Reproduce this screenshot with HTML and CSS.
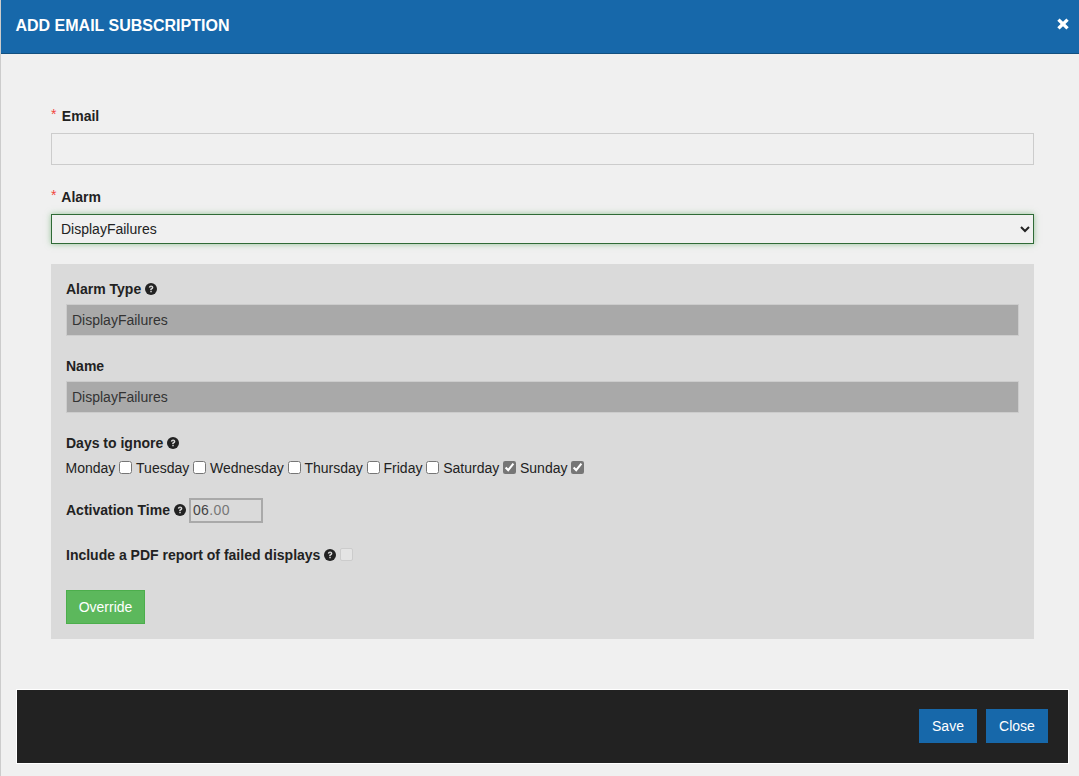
FILE: index.html
```html
<!DOCTYPE html>
<html lang="en">
<head>
<meta charset="utf-8">
<title>Add Email Subscription</title>
<link rel="stylesheet" href="styles.css">
</head>
<body>
<div class="modal">
  <header class="modal-header">
    <h1 class="modal-title">ADD EMAIL SUBSCRIPTION</h1>
    <svg class="close-icon" viewBox="0 0 12 12" aria-label="Close"><path d="M2.600 .5 6 3.700 9.400 .5 11.700 2.800 8.400 6l3.300 3.200-2.300 2.300L6 8.300 2.600 11.500 .3 9.200 3.600 6 .3 2.800z"/></svg>
  </header>
  <main class="modal-body">
    <div class="field field-email">
      <label class="req-label"><span class="star">*</span> Email</label>
      <input class="text-input" type="text">
    </div>
    <div class="field field-alarm">
      <label class="req-label"><span class="star">*</span> Alarm</label>
      <select class="select-input"><option>DisplayFailures</option></select>
    </div>
    <section class="panel">
      <div class="panel-row row-type">
        <label class="label">Alarm Type <svg class="help" viewBox="0 0 24 24"><circle cx="12" cy="12" r="12"/><path class="help-q" d="M7.6 9.200C7.900 6.500 9.700 5 12.200 5c2.600 0 4.500 1.600 4.500 3.800 0 1.800-1 2.700-2.300 3.500-1 .6-1.300 1-1.300 1.900h-2.900c0-2 .6-2.900 2-3.700 1-.6 1.400-1 1.400-1.600 0-.7-.6-1.200-1.400-1.200-.9 0-1.500.6-1.700 1.700zM10.600 15.700h2.900v3h-2.900z"/></svg></label>
        <input class="readonly-input" type="text" value="DisplayFailures" readonly>
      </div>
      <div class="panel-row row-name">
        <label class="label">Name</label>
        <input class="readonly-input" type="text" value="DisplayFailures" readonly>
      </div>
      <div class="row-days">
        <label class="label">Days to ignore <svg class="help" viewBox="0 0 24 24"><circle cx="12" cy="12" r="12"/><path class="help-q" d="M7.6 9.200C7.900 6.500 9.700 5 12.200 5c2.600 0 4.500 1.600 4.500 3.800 0 1.800-1 2.700-2.300 3.500-1 .6-1.300 1-1.300 1.900h-2.900c0-2 .6-2.900 2-3.700 1-.6 1.400-1 1.400-1.600 0-.7-.6-1.200-1.400-1.200-.9 0-1.500.6-1.700 1.700zM10.600 15.700h2.900v3h-2.900z"/></svg></label>
        <div class="days">
          <span class="day">Monday <input class="check" type="checkbox"></span>
          <span class="day">Tuesday <input class="check" type="checkbox"></span>
          <span class="day">Wednesday <input class="check" type="checkbox"></span>
          <span class="day">Thursday <input class="check" type="checkbox"></span>
          <span class="day">Friday <input class="check" type="checkbox"></span>
          <span class="day">Saturday <input class="check" type="checkbox" checked></span>
          <span class="day">Sunday <input class="check" type="checkbox" checked></span>
        </div>
      </div>
      <div class="row-time">
        <label class="label">Activation Time <svg class="help" viewBox="0 0 24 24"><circle cx="12" cy="12" r="12"/><path class="help-q" d="M7.6 9.200C7.900 6.500 9.700 5 12.200 5c2.600 0 4.500 1.600 4.500 3.800 0 1.800-1 2.700-2.300 3.500-1 .6-1.300 1-1.300 1.900h-2.900c0-2 .6-2.900 2-3.700 1-.6 1.400-1 1.400-1.600 0-.7-.6-1.200-1.400-1.200-.9 0-1.500.6-1.700 1.700zM10.600 15.700h2.900v3h-2.900z"/></svg></label>
        <div class="time-box"><span class="time-h">06</span><span class="time-m">.00</span></div>
      </div>
      <div class="row-pdf">
        <label class="label">Include a PDF report of failed displays <svg class="help" viewBox="0 0 24 24"><circle cx="12" cy="12" r="12"/><path class="help-q" d="M7.6 9.200C7.900 6.500 9.700 5 12.200 5c2.600 0 4.500 1.600 4.500 3.800 0 1.800-1 2.700-2.300 3.500-1 .6-1.300 1-1.300 1.900h-2.900c0-2 .6-2.900 2-3.700 1-.6 1.400-1 1.400-1.600 0-.7-.6-1.200-1.400-1.200-.9 0-1.500.6-1.700 1.700zM10.600 15.700h2.900v3h-2.900z"/></svg></label>
        <span class="pdf-check"></span>
      </div>
      <button class="btn-override" type="button">Override</button>
    </section>
  </main>
  <footer class="modal-footer">
    <button class="btn-primary btn-save" type="button">Save</button>
    <button class="btn-primary btn-close" type="button">Close</button>
  </footer>
</div>
</body>
</html>
```
FILE: styles.css
```css
* { box-sizing: border-box; }
html, body { margin: 0; height: 100%; }
body {
  background: #f0f0f0;
  font-family: "Liberation Sans", Arial, sans-serif;
  font-size: 14px;
  color: #222;
  overflow: hidden;
}
.modal {
  height: 776px;
  border-left: 1px solid #ccc;
}
.modal-header {
  height: 54px;
  background: #1768aa;
  border-bottom: 1px solid #125080;
  display: flex;
  align-items: center;
  justify-content: space-between;
  padding: 0 10px 1px 14.5px;
}
.modal-title {
  margin: 0;
  font-size: 16px;
  font-weight: 700;
  color: #fff;
}
.close-icon { width: 12px; height: 12px; fill: #fff; margin-bottom: 5px; }
.modal-body { padding: 52px 45px 0 50px; }
.req-label, .label {
  display: block;
  font-weight: 700;
  font-size: 14px;
  line-height: 20px;
  color: #222;
}
.star {
  color: #f0453c;
  font-weight: 400;
  font-size: 14px;
  margin-right: 1.5px;
  position: relative;
  top: -2px;
}
.field-email { height: 81px; }
.field-email .req-label { margin-bottom: 7px; }
.text-input {
  display: block;
  width: 100%;
  height: 32px;
  background: #f0f0f0;
  border: 1px solid #ccc;
  padding: 0 9px;
}
.field-alarm .req-label { margin-bottom: 7px; }
.select-input {
  display: block;
  width: 100%;
  height: 30px;
  background: #f0f0f0;
  border: 1px solid #2f6a36;
  border-radius: 0;
  box-shadow: 0 0 6px rgba(76, 160, 80, .55);
  padding: 0 5px;
  font: 14px "Liberation Sans", Arial, sans-serif;
  color: #222;
  outline: none;
}
.panel {
  margin-top: 20px;
  height: 375px;
  background: #dadada;
  padding: 15px;
}
.row-type { height: 77px; }
.row-name { height: 77px; }
.panel-row .label { margin-bottom: 5px; }
.readonly-input {
  display: block;
  width: 100%;
  height: 32px;
  background: #a9a9a9;
  border: 1px solid #ccc;
  padding: 0 5px;
  font: 14px "Liberation Sans", Arial, sans-serif;
  color: #333;
  outline: none;
}
.help { width: 12px; height: 12px; fill: #222; vertical-align: -1px; }
.help-q { fill: #dadada; }
.row-days { height: 65px; }
.days { display: flex; gap: 3.750px; line-height: 20px; margin: 5px 0 0 -0.5px; }
.day { display: inline-flex; align-items: center; gap: 4px; white-space: nowrap; }
.check { margin: 0; width: 13px; height: 13px; position: relative; top: -1px; accent-color: #767676; }
.row-time { display: flex; align-items: center; gap: 3px; height: 24px; }
.time-box {
  width: 74px;
  height: 25px;
  border: 2px solid #a9a9a9;
  padding-left: 2px;
  line-height: 21px;
  font-size: 14px;
  letter-spacing: .4px;
  background: #dadada;
}
.time-h { color: #444; }
.time-m { color: #777; }
.row-pdf { display: flex; align-items: center; gap: 4px; height: 20px; margin-top: 23px; }
.pdf-check {
  width: 13px;
  height: 13px;
  background: #e4e4e4;
  border: 1px solid #ccc;
  border-radius: 2px;
  position: relative;
  top: -1px;
}
.btn-override {
  display: block;
  margin-top: 25px;
  width: 79px;
  height: 34px;
  background: #5cb85c;
  border: 1px solid #4cae4c;
  color: #fff;
  font: 14px "Liberation Sans", Arial, sans-serif;
  padding: 0;
}
.modal-footer {
  margin: 50px 10px 0 15px;
  height: 75px;
  background: #222;
  border: 1px solid #fff;
  display: flex;
  justify-content: flex-end;
  align-items: center;
  gap: 9px;
  padding: 0 20px 1px 0;
}
.btn-primary {
  height: 34px;
  background: #1768aa;
  border: 0;
  color: #fff;
  font: 14px "Liberation Sans", Arial, sans-serif;
  padding: 0;
}
.btn-save { width: 58px; }
.btn-close { width: 62px; }
```
